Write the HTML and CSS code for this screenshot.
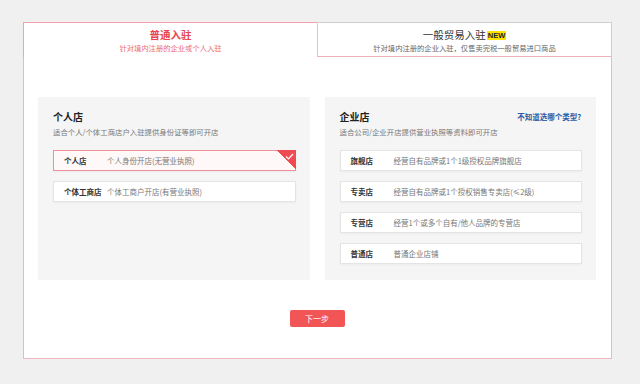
FILE: index.html
```html
<!DOCTYPE html>
<html lang="zh">
<head>
<meta charset="utf-8">
<link rel="stylesheet" href="styles.css">
</head>
<body>
<div class="main">
  <div class="tabs">
    <div class="tab tab-active">
      <div class="tab-title">普通入驻</div>
      <div class="tab-sub">针对境内注册的企业或个人入驻</div>
    </div>
    <div class="tab tab-other">
      <div class="tab-title">一般贸易入驻<span class="badge">NEW</span></div>
      <div class="tab-sub">针对境内注册的企业入驻，仅售卖完税一般贸易进口商品</div>
    </div>
  </div>
  <div class="panel">
    <div class="cards">
      <div class="card">
        <div class="card-head"><span class="card-title">个人店</span></div>
        <div class="card-desc">适合个人/个体工商店户入驻提供身份证等即可开店</div>
        <div class="item selected">
          <span class="label">个人店</span><span class="desc">个人身份开店(无营业执照)</span>
          <span class="corner"><svg width="9" height="7" viewBox="0 0 9 7"><path d="M1 3.5 L3.5 6 L8 1" fill="none" stroke="#fff" stroke-width="1.2"/></svg></span>
        </div>
        <div class="item">
          <span class="label">个体工商店</span><span class="desc">个体工商户开店(有营业执照)</span>
        </div>
      </div>
      <div class="card">
        <div class="card-head"><span class="card-title">企业店</span><span class="help">不知道选哪个类型?</span></div>
        <div class="card-desc">适合公司/企业开店提供营业执照等资料即可开店</div>
        <div class="item">
          <span class="label">旗舰店</span><span class="desc">经营自有品牌或1个1级授权品牌旗舰店</span>
        </div>
        <div class="item">
          <span class="label">专卖店</span><span class="desc">经营自有品牌或1个授权销售专卖店(≤2级)</span>
        </div>
        <div class="item">
          <span class="label">专营店</span><span class="desc">经营1个或多个自有/他人品牌的专营店</span>
        </div>
        <div class="item">
          <span class="label">普通店</span><span class="desc">普通企业店铺</span>
        </div>
      </div>
    </div>
    <div class="actions"><button class="btn">下一步</button></div>
  </div>
</div>
</body>
</html>
```

FILE: styles.css
```css
* { box-sizing: border-box; }
html, body { margin: 0; padding: 0; }
body {
  background: #f0f0f0;
  font-family: "Noto Sans CJK SC", "Noto Sans", sans-serif;
  width: 640px;
  height: 384px;
  overflow: hidden;
}
.main {
  margin: 22px 0 0 23px;
  width: 589px;
}
.tabs {
  display: flex;
  height: 35px;
}
.tab {
  text-align: center;
  padding-top: 5px;
  background: #fff;
}
.tab-active {
  width: 294px;
  border-top: 1px solid #f2a2ac;
  border-left: 1px solid #f2a2ac;
}
.tab-other {
  width: 295px;
  border: 1px solid #cfcfcf;
  border-bottom: 1px solid #eeb0ba;
}
.tab-title {
  font-size: 10.5px;
  line-height: 14px;
  height: 14px;
}
.tab-active .tab-title { color: #e8464e; font-weight: bold; }
.tab-other .tab-title { color: #333; }
.badge {
  display: inline-block;
  background: #ffe400;
  color: #222;
  font-family: "Liberation Sans", sans-serif;
  font-weight: bold;
  font-size: 7.5px;
  line-height: 9px;
  padding: 0 1px;
  margin-left: 1px;
  vertical-align: 1px;
}
.tab-sub {
  font-size: 7.3px;
  line-height: 10px;
  margin-top: 1px;
}
.tab-active .tab-sub { color: #ec6a74; }
.tab-other .tab-sub { color: #666; }
.panel {
  background: #fff;
  border: 1px solid #f0b6be;
  border-top: none;
  height: 302px;
  padding: 40px 15px 0 14px;
}
.cards {
  display: flex;
  gap: 15px;
}
.card {
  background: #f5f5f5;
  height: 183px;
  flex: 1;
  padding: 12px 15px 0 15px;
}
.card-head {
  display: flex;
  justify-content: space-between;
  align-items: center;
  height: 14px;
}
.card-title {
  font-size: 10px;
  font-weight: bold;
  color: #222;
}
.help {
  font-size: 7.5px;
  color: #2a5ea8;
  font-weight: bold;
}
.card-desc {
  font-size: 7.4px;
  line-height: 10px;
  color: #777;
  margin-top: 4px;
  margin-bottom: 13px;
}
.item {
  position: relative;
  display: flex;
  align-items: center;
  height: 21px;
  background: #fff;
  border: 1px solid #e4e4e4;
  box-shadow: 0 1px 2px rgba(0,0,0,0.04);
  margin-bottom: 10px;
  padding-left: 10px;
  font-size: 7.5px;
  margin-right: -1px;
}
.item.selected {
  border-color: #f0909c;
  background: #fff8f8;
}
.label {
  width: 43px;
  font-weight: bold;
  color: #333;
  white-space: nowrap;
}
.desc {
  color: #777;
  white-space: nowrap;
}
.corner {
  position: absolute;
  top: -1px;
  right: -1px;
  width: 19px;
  height: 19px;
  background: linear-gradient(to bottom left, #ee4b53 50%, transparent 50%);
}
.corner svg {
  position: absolute;
  top: 3px;
  right: 2px;
}
.actions {
  display: flex;
  justify-content: center;
  margin-top: 30px;
}
.btn {
  width: 55px;
  height: 17px;
  border: none;
  border-radius: 2px;
  background: #f25556;
  color: #fff;
  font-family: "Noto Sans CJK SC", sans-serif;
  font-size: 8px;
  padding: 0;
}
```
